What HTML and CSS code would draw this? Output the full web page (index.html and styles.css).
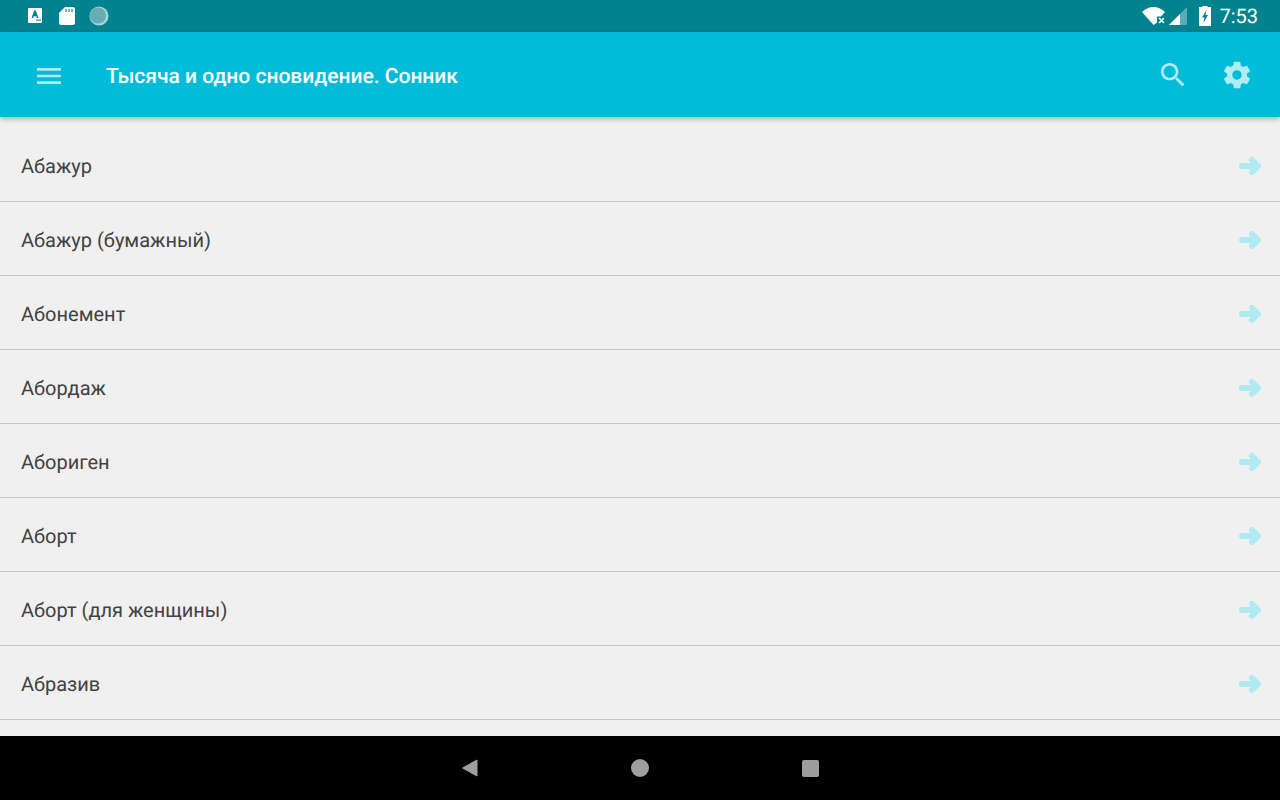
FILE: index.html
```html
<!DOCTYPE html>
<html lang="ru">
<head>
    <meta charset="UTF-8">
    <meta name="viewport" content="width=device-width, initial-scale=1.0">
    <title>Тысяча и одно сновидение. Сонник</title>
    <link rel="stylesheet" href="styles.css">
</head>
<body>

<div class="screen">
    <div class="status-bar">
        <div class="status-left">
            <svg class="note-a" width="15" height="16" viewBox="0 0 15 16">
                <rect x="0" y="0" width="14" height="15" rx="1" fill="#fff"/>
                <path d="M3.5 10 L6.2 2.5 H7.8 L10.5 10 H8.8 L8.3 8.3 H5.7 L5.2 10 Z" fill="#00838f"/>
                <rect x="8" y="11.5" width="5" height="1.5" fill="#00838f" opacity="0.7"/>
            </svg>
            <svg class="note-sd" width="16" height="20" viewBox="0 0 16 20">
                <path d="M6 1 H14 Q16 1 16 3 V17 Q16 19 14 19 H2 Q0 19 0 17 V7 Z" fill="#fff"/>
                <rect x="6" y="3" width="2" height="3" fill="#00838f" opacity="0.6"/>
                <rect x="9" y="3" width="2" height="3" fill="#00838f" opacity="0.6"/>
                <rect x="12" y="3" width="2" height="3" fill="#00838f" opacity="0.6"/>
            </svg>
            <svg class="note-round" width="20" height="20" viewBox="0 0 20 20">
                <circle cx="10" cy="10" r="9.5" fill="#a9d2d6"/>
                <circle cx="9" cy="9.5" r="8" fill="#66adb4"/>
            </svg>
        </div>
        <div class="status-right">
            <svg class="wifi" width="24" height="18" viewBox="0 0 24 18">
                <path d="M0 5 C3 2 7 0 11.5 0 C16 0 20 2 23 5 L19 9.5 H15 V15.5 L11.5 18 Z" fill="#fff"/>
                <path d="M17 11 L22 16 M22 11 L17 16" stroke="#fff" stroke-width="1.6"/>
            </svg>
            <svg class="signal" width="18" height="18" viewBox="0 0 18 18">
                <path d="M0 18 L18 0 V18 Z" fill="#fff" opacity="0.35"/>
                <path d="M0 18 L11 7 V18 Z" fill="#fff"/>
            </svg>
            <svg class="battery" width="12" height="20" viewBox="0 0 12 20">
                <path d="M3.5 1 V0 H8.5 V1 H12 V20 H0 V1 Z" fill="#fff"/>
                <path d="M7.5 4 L3 11.5 H5.5 L4.5 17 L9 9 H6.5 Z" fill="#00838f"/>
            </svg>
            <span class="clock">7:53</span>
        </div>
    </div>

    <header class="app-bar">
        <svg class="menu-icon" width="32" height="32" viewBox="0 0 24 24">
            <path d="M3 18h18v-2H3v2zm0-5h18v-2H3v2zm0-7v2h18V6H3z" fill="#fff"/>
        </svg>
        <h1 class="app-title">Тысяча и одно сновидение. Сонник</h1>
        <svg class="search-icon" width="32" height="32" viewBox="0 0 24 24">
            <path d="M15.5 14h-.79l-.28-.27C15.41 12.59 16 11.11 16 9.5 16 5.91 13.09 3 9.5 3S3 5.91 3 9.5 5.91 16 9.5 16c1.61 0 3.09-.59 4.23-1.57l.27.28v.79l5 4.99L20.49 19l-4.99-5zm-6 0C7.01 14 5 11.99 5 9.5S7.01 5 9.5 5 14 7.01 14 9.5 11.99 14 9.5 14z" fill="#fff"/>
        </svg>
        <svg class="gear-icon" width="32" height="32" viewBox="0 0 24 24">
            <path d="M19.43 12.98c.04-.32.07-.64.07-.98s-.03-.66-.07-.98l2.11-1.65c.19-.15.24-.42.12-.64l-2-3.46c-.12-.22-.39-.3-.61-.22l-2.49 1c-.52-.4-1.08-.73-1.69-.98l-.38-2.65C14.46 2.18 14.25 2 14 2h-4c-.25 0-.46.18-.49.42l-.38 2.65c-.61.25-1.17.59-1.69.98l-2.49-1c-.23-.09-.49 0-.61.22l-2 3.46c-.13.22-.07.49.12.64l2.11 1.65c-.04.32-.07.65-.07.98s.03.66.07.98l-2.11 1.65c-.19.15-.24.42-.12.64l2 3.46c.12.22.39.3.61.22l2.49-1c.52.4 1.08.73 1.69.98l.38 2.65c.03.24.24.42.49.42h4c.25 0 .46-.18.49-.42l.38-2.65c.61-.25 1.17-.59 1.69-.98l2.49 1c.23.09.49 0 .61-.22l2-3.46c.12-.22.07-.49-.12-.64l-2.11-1.65zM12 15.5c-1.93 0-3.5-1.57-3.5-3.5s1.57-3.5 3.5-3.5 3.5 1.57 3.5 3.5-1.57 3.5-3.5 3.5z" fill="#fff"/>
        </svg>
    </header>

    <ul class="word-list">
        <li class="word-row"><span>Абажур</span><svg class="row-arrow" width="24" height="20" viewBox="0 0 24 20"><path d="M3 10 H19 M13 4 L19 10 L13 16" /></svg></li>
        <li class="word-row"><span>Абажур (бумажный)</span><svg class="row-arrow" width="24" height="20" viewBox="0 0 24 20"><path d="M3 10 H19 M13 4 L19 10 L13 16" /></svg></li>
        <li class="word-row"><span>Абонемент</span><svg class="row-arrow" width="24" height="20" viewBox="0 0 24 20"><path d="M3 10 H19 M13 4 L19 10 L13 16" /></svg></li>
        <li class="word-row"><span>Абордаж</span><svg class="row-arrow" width="24" height="20" viewBox="0 0 24 20"><path d="M3 10 H19 M13 4 L19 10 L13 16" /></svg></li>
        <li class="word-row"><span>Абориген</span><svg class="row-arrow" width="24" height="20" viewBox="0 0 24 20"><path d="M3 10 H19 M13 4 L19 10 L13 16" /></svg></li>
        <li class="word-row"><span>Аборт</span><svg class="row-arrow" width="24" height="20" viewBox="0 0 24 20"><path d="M3 10 H19 M13 4 L19 10 L13 16" /></svg></li>
        <li class="word-row"><span>Аборт (для женщины)</span><svg class="row-arrow" width="24" height="20" viewBox="0 0 24 20"><path d="M3 10 H19 M13 4 L19 10 L13 16" /></svg></li>
        <li class="word-row"><span>Абразив</span><svg class="row-arrow" width="24" height="20" viewBox="0 0 24 20"><path d="M3 10 H19 M13 4 L19 10 L13 16" /></svg></li>
    </ul>

    <nav class="nav-bar">
        <svg class="nav-back" width="18" height="18" viewBox="0 0 18 18"><path d="M1.5 9 L16 1 V17 Z" fill="#9e9e9e" stroke="#9e9e9e" stroke-linejoin="round"/></svg>
        <div class="nav-home"></div>
        <div class="nav-recent"></div>
    </nav>
</div>

</body>
</html>
```

FILE: styles.css
```css
* {
    box-sizing: border-box;
}
html, body {
    margin: 0;
    padding: 0;
}
body {
    font-family: Roboto, "Liberation Sans", sans-serif;
    background-color: #f0f0f0;
    color: #424242;
    text-rendering: geometricPrecision;
}
.screen {
    width: 1280px;
    height: 800px;
    display: flex;
    flex-direction: column;
    overflow: hidden;
}
.status-bar {
    height: 32px;
    flex-shrink: 0;
    display: flex;
    justify-content: space-between;
    align-items: center;
    background-color: #00838f;
    padding: 0 22px 0 28px;
}
.status-left, .status-right {
    display: flex;
    align-items: center;
}
.note-sd {
    margin-left: 16px;
}
.note-round {
    margin-left: 14px;
}
.signal {
    margin-left: 3px;
}
.battery {
    margin-left: 12px;
}
.clock {
    margin-left: 8px;
    color: #fff;
    font-size: 20px;
}
.app-bar {
    height: 85px;
    flex-shrink: 0;
    display: flex;
    align-items: center;
    background-color: #00bcd9;
    padding: 0 27px 0 33px;
    box-shadow: 0 2px 5px rgba(0, 0, 0, 0.28);
    position: relative;
}
.menu-icon {
    opacity: 0.7;
    margin-top: 2px;
}
.app-title {
    flex: 1;
    margin: 0 0 0 41px;
    padding-top: 4px;
    font-size: 21px;
    font-weight: 500;
    color: #fff;
}
.search-icon {
    opacity: 0.7;
    margin-right: 32px;
}
.gear-icon {
    opacity: 0.7;
}
.word-list {
    flex: 1;
    list-style: none;
    margin: 0;
    padding: 11px 0 0;
    overflow: hidden;
}
.word-row {
    height: 74px;
    display: flex;
    align-items: center;
    justify-content: space-between;
    padding: 2px 17px 0 21px;
    border-bottom: 1px solid #c4c4c4;
    font-size: 20px;
}
.row-arrow {
    fill: none;
    stroke: #aeeaf2;
    stroke-width: 6;
    stroke-linecap: round;
    stroke-linejoin: round;
}
.nav-bar {
    height: 64px;
    flex-shrink: 0;
    display: flex;
    align-items: center;
    justify-content: center;
    gap: 152px;
    background-color: #000;
}
.nav-back {
    margin-left: -2px;
}
.nav-home {
    width: 18px;
    height: 18px;
    border-radius: 50%;
    background-color: #9e9e9e;
}
.nav-recent {
    width: 17px;
    height: 17px;
    margin: 0 -1px 0 1px;
    border-radius: 2px;
    background-color: #9e9e9e;
}
```
